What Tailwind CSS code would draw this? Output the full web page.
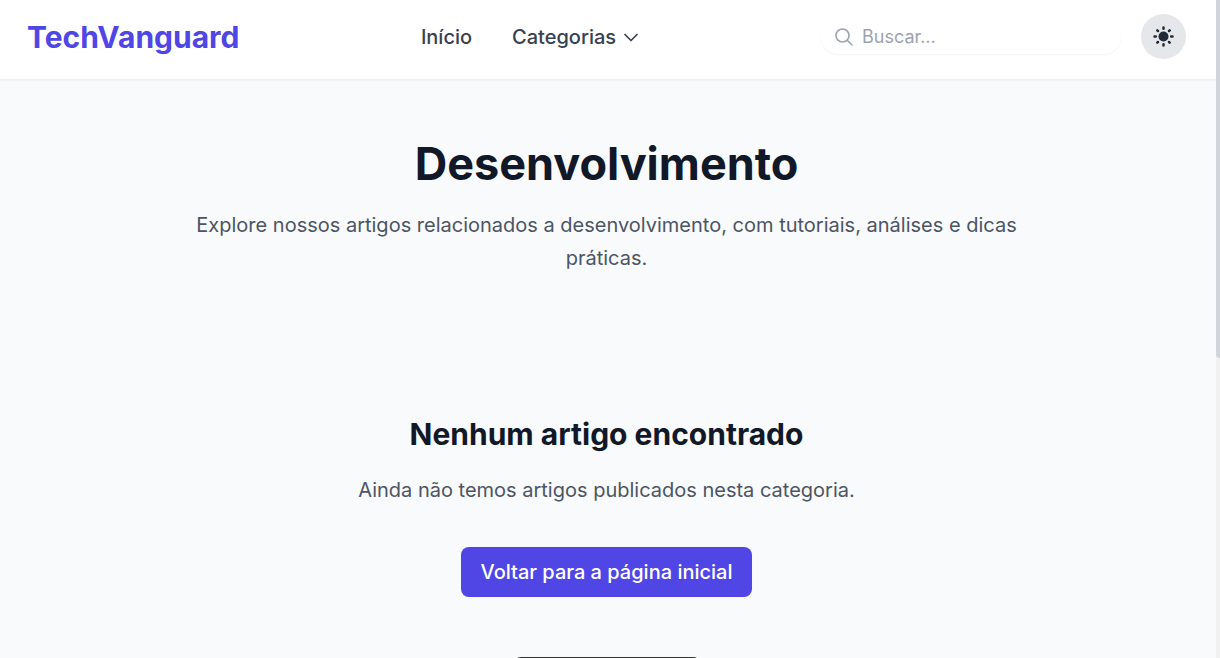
<!DOCTYPE html>
<html lang="pt-BR">
<head>
<meta charset="utf-8">
<meta name="viewport" content="width=device-width, initial-scale=1">
<title>Desenvolvimento | TechVanguard</title>
<script src="https://cdn.jsdelivr.net/npm/@tailwindcss/browser@4"></script>
</head>
<body class="h-screen overflow-hidden bg-[#f9fafc] font-['Inter',sans-serif] text-[#111827]">
<div class="flex h-full">
  <div class="min-w-0 flex-1 overflow-hidden">
    <header class="grid h-[79px] grid-cols-[1fr_auto_1fr] items-center bg-white pr-[30px] pb-[6px] pl-[27px] shadow-[0_1px_3px_rgba(0,0,0,0.07)]">
      <a href="#" class="justify-self-start text-[30px] leading-9 font-bold text-[#4f46e5]">TechVanguard</a>
      <nav class="flex items-center gap-10 pr-[154px] text-xl font-medium text-[#374151]">
        <a href="#">Início</a>
        <button type="button" class="flex items-center gap-2">Categorias
          <svg class="size-[14px]" viewBox="0 0 14 14" fill="none" stroke="currentColor" stroke-width="1.7" stroke-linecap="round" stroke-linejoin="round" aria-hidden="true"><path d="M1 4.5 7 10.5 13 4.5"/></svg>
        </button>
      </nav>
      <div class="flex items-center gap-5 justify-self-end">
        <label class="flex h-[35px] w-[300px] items-center gap-[9px] rounded-full bg-white px-3.5 shadow-xs">
          <svg class="size-[18px] shrink-0 text-[#9ca3af]" viewBox="0 0 18 18" fill="none" stroke="currentColor" stroke-width="1.6" stroke-linecap="round" aria-hidden="true"><circle cx="7.5" cy="7.5" r="6.5"/><path d="m12.2 12.2 4.8 4.8"/></svg>
          <input type="search" aria-label="Buscar" placeholder="Buscar..." class="min-w-0 flex-1 bg-transparent text-lg outline-none placeholder:text-[#9ca3af]">
        </label>
        <button type="button" aria-label="Alternar tema" class="flex size-[45px] items-center justify-center rounded-full bg-[#e5e7eb] text-[#1f2937]">
          <svg class="size-[21px]" viewBox="0 0 21 21" fill="currentColor" stroke="currentColor" stroke-width="2.5" stroke-linecap="round" aria-hidden="true"><circle cx="10.5" cy="10.5" r="5" stroke="none"/><path d="M10.5 1.5v1.3M10.5 18.2v1.3M1.5 10.5h1.3M18.2 10.5h1.3M4.3 4.3l.7.7M16 16l.7.7M4.3 16.7l.7-.7M16 5l.7-.7"/></svg>
        </button>
      </div>
    </header>
    <main class="flex flex-col items-center pt-[60px] pr-[3px] text-center">
      <h1 class="text-[45px] leading-[50px] font-bold">Desenvolvimento</h1>
      <p class="mt-5 max-w-[840px] text-xl leading-[33px] text-[#4b5563]">Explore nossos artigos relacionados a desenvolvimento, com tutoriais, análises e dicas práticas.</p>
      <h2 class="mt-[140px] text-[30px] leading-[38px] font-bold">Nenhum artigo encontrado</h2>
      <p class="mt-5 text-xl leading-[34px] text-[#4b5563]">Ainda não temos artigos publicados nesta categoria.</p>
      <a href="#" class="mt-10 rounded-lg bg-[#4f46e5] px-5 py-2.5 text-xl leading-[30px] font-medium text-white">Voltar para a página inicial</a>
      <div class="mt-[60px] h-10 w-[188px] rounded-lg bg-[#333333]"></div>
    </main>
  </div>
  <div class="w-1 bg-[#f1f1f1]" aria-hidden="true"><div class="h-[358px] rounded-bl-sm bg-[#d1d5db]"></div></div>
</div>
</body>
</html>
